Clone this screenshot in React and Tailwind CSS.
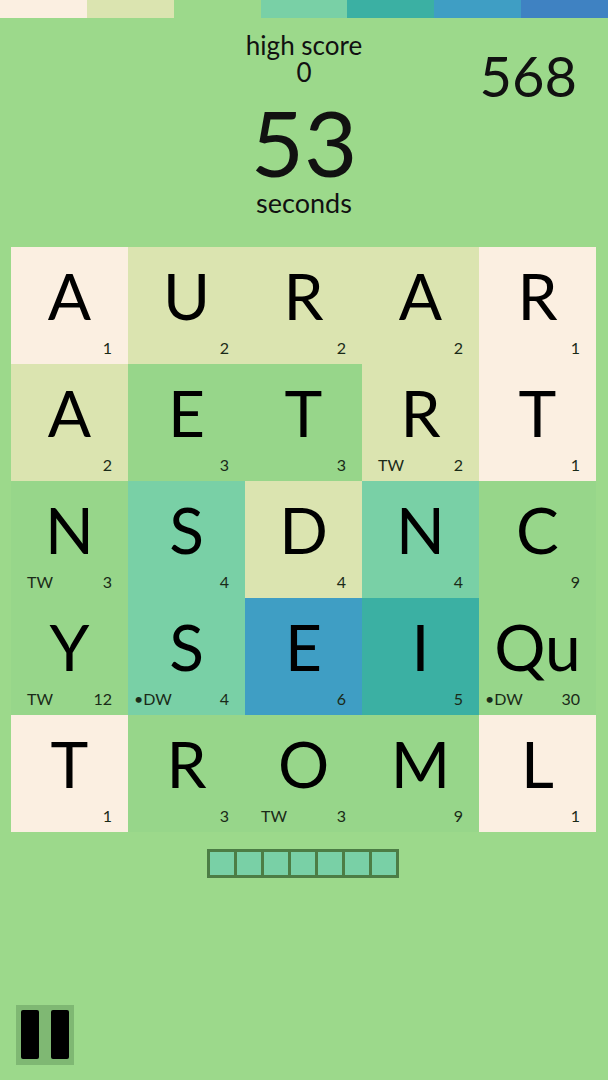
import React from 'react';

const COLORS = {
  cream: 'bg-[#fbefe1]',
  pale: 'bg-[#dbe4b0]',
  green: 'bg-[#97d68a]',
  mint: 'bg-[#79d0a6]',
  teal: 'bg-[#3bb0a3]',
  blue: 'bg-[#3f9ec4]',
};

const TILES = [
  ['A', 'cream', 1], ['U', 'pale', 2], ['R', 'pale', 2], ['A', 'pale', 2], ['R', 'cream', 1],
  ['A', 'pale', 2], ['E', 'green', 3], ['T', 'green', 3], ['R', 'pale', 2, 'TW'], ['T', 'cream', 1],
  ['N', 'green', 3, 'TW'], ['S', 'mint', 4], ['D', 'pale', 4], ['N', 'mint', 4], ['C', 'green', 9],
  ['Y', 'green', 12, 'TW'], ['S', 'mint', 4, '•DW'], ['E', 'blue', 6], ['I', 'teal', 5], ['Qu', 'green', 30, '•DW'],
  ['T', 'cream', 1], ['R', 'green', 3], ['O', 'green', 3, 'TW'], ['M', 'green', 9], ['L', 'cream', 1],
];

const BAR = ['bg-[#fbefe1]', 'bg-[#dbe4b0]', 'bg-[#9cd98b]', 'bg-[#79d0a6]', 'bg-[#3bb0a3]', 'bg-[#3f9ec4]', 'bg-[#3f82c2]'];

function Tile({ letter, color, points, bonus }) {
  return (
    <div className={`${COLORS[color]} h-[117px] flex flex-col`}>
      <div className="flex-1 flex items-center justify-center pt-[4px] text-[64px] leading-none text-black">
        {letter}
      </div>
      <div className="flex justify-between items-end px-[16px] pb-[8px] text-[16px] leading-none text-[#1a2a18]">
        <span className={bonus && bonus.startsWith('•') ? '-ml-[10px]' : ''}>{bonus || ''}</span>
        <span>{points}</span>
      </div>
    </div>
  );
}

export default function App() {
  return (
    <div className="w-[608px] h-[1080px] bg-[#9cd98b] flex flex-col overflow-hidden" style={{ fontFamily: '"Lato", "Noto Sans", sans-serif' }}>
      <div className="flex h-[18px]">
        {BAR.map((c, i) => (
          <div key={i} className={`${c} flex-1`} />
        ))}
      </div>

      <div className="grid grid-cols-[1fr_auto_1fr] text-[#111]">
        <div />
        <div className="flex flex-col items-center pt-[13px]">
          <div className="text-[26px] leading-[28px]">high score</div>
          <div className="text-[26px] leading-[26px]">0</div>
          <div className="text-[92px] leading-[92px] mt-[11px]">53</div>
          <div className="text-[27px] leading-[30px]">seconds</div>
        </div>
        <div className="flex justify-end pr-[31px] pt-[28px]">
          <span className="text-[56px] leading-[60px]">568</span>
        </div>
      </div>

      <div className="grid grid-cols-5 w-[585px] ml-[11px] mt-[29px]">
        {TILES.map(([l, c, p, b], i) => (
          <Tile key={i} letter={l} color={c} points={p} bonus={b} />
        ))}
      </div>

      <div className="flex justify-center mt-[17px] pr-[2px]">
        <div className="flex gap-[3px] bg-[#4c7d45] p-[3px]">
          {Array.from({ length: 7 }).map((_, i) => (
            <div key={i} className="w-[24px] h-[23px] bg-[#79d0a6]" />
          ))}
        </div>
      </div>

      <div className="mt-auto mb-[15px] ml-[16px] w-[58px] h-[60px] bg-[#7fb873] flex gap-[12px] p-[5px]">
        <div className="w-[18px] h-[49px] bg-black rounded-[2px]" />
        <div className="w-[18px] h-[49px] bg-black rounded-[2px]" />
      </div>
    </div>
  );
}
